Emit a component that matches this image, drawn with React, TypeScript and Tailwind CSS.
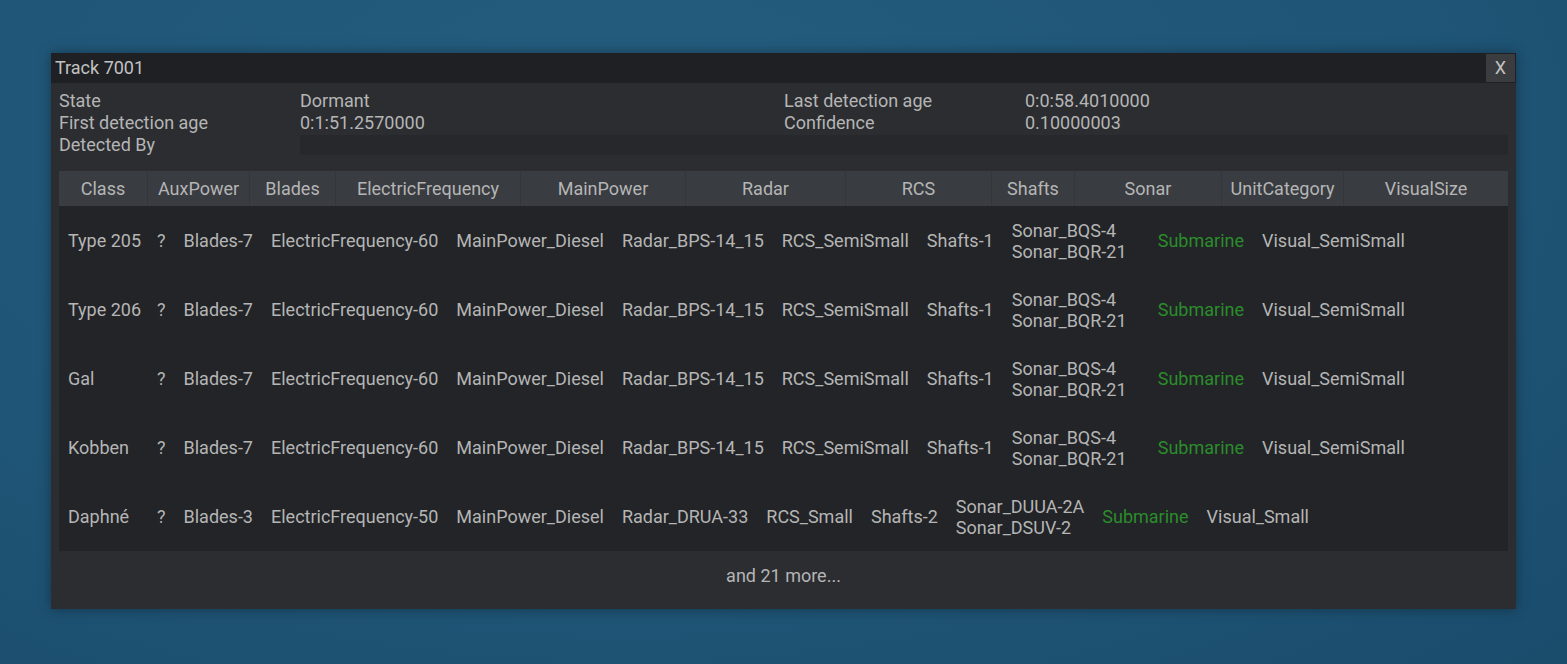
import React from 'react';

type Row = {
  cls: string;
  blades: string;
  freq: string;
  radar: string;
  rcs: string;
  shafts: string;
  sonar: [string, string];
  visual: string;
};

const rows: Row[] = [
  { cls: 'Type 205', blades: 'Blades-7', freq: 'ElectricFrequency-60', radar: 'Radar_BPS-14_15', rcs: 'RCS_SemiSmall', shafts: 'Shafts-1', sonar: ['Sonar_BQS-4', 'Sonar_BQR-21'], visual: 'Visual_SemiSmall' },
  { cls: 'Type 206', blades: 'Blades-7', freq: 'ElectricFrequency-60', radar: 'Radar_BPS-14_15', rcs: 'RCS_SemiSmall', shafts: 'Shafts-1', sonar: ['Sonar_BQS-4', 'Sonar_BQR-21'], visual: 'Visual_SemiSmall' },
  { cls: 'Gal', blades: 'Blades-7', freq: 'ElectricFrequency-60', radar: 'Radar_BPS-14_15', rcs: 'RCS_SemiSmall', shafts: 'Shafts-1', sonar: ['Sonar_BQS-4', 'Sonar_BQR-21'], visual: 'Visual_SemiSmall' },
  { cls: 'Kobben', blades: 'Blades-7', freq: 'ElectricFrequency-60', radar: 'Radar_BPS-14_15', rcs: 'RCS_SemiSmall', shafts: 'Shafts-1', sonar: ['Sonar_BQS-4', 'Sonar_BQR-21'], visual: 'Visual_SemiSmall' },
  { cls: 'Daphné', blades: 'Blades-3', freq: 'ElectricFrequency-50', radar: 'Radar_DRUA-33', rcs: 'RCS_Small', shafts: 'Shafts-2', sonar: ['Sonar_DUUA-2A', 'Sonar_DSUV-2'], visual: 'Visual_Small' },
];

const headers: { label: string; w: string }[] = [
  { label: 'Class', w: 'w-[89px]' },
  { label: 'AuxPower', w: 'w-[102px]' },
  { label: 'Blades', w: 'w-[86px]' },
  { label: 'ElectricFrequency', w: 'w-[185px]' },
  { label: 'MainPower', w: 'w-[165px]' },
  { label: 'Radar', w: 'w-[160px]' },
  { label: 'RCS', w: 'w-[146px]' },
  { label: 'Shafts', w: 'w-[83px]' },
  { label: 'Sonar', w: 'w-[147px]' },
  { label: 'UnitCategory', w: 'w-[122px]' },
  { label: 'VisualSize', w: 'flex-1' },
];

function Cell({ children, className = '' }: { children: React.ReactNode; className?: string }) {
  return <div className={['shrink-0 px-[9px] whitespace-nowrap', className].join(' ')}>{children}</div>;
}

export default function App() {
  return (
    <div
      className="h-[664px] w-full bg-[radial-gradient(ellipse_at_40%_20%,#245d7f_0%,#1f5576_60%,#1a4c6c_100%)] pt-[53px] pl-[51px] text-[18px] leading-[22px] text-[#b5b5b5]"
      style={{ fontFamily: 'Roboto, "Noto Sans", sans-serif' }}
    >
      <div className="w-[1465px] bg-[#2b2d31] shadow-[0_0_12px_rgba(0,0,0,0.35)]">
        {/* title bar */}
        <div className="flex h-[30px] items-center bg-[#1e2023]">
          <div className="flex-1 pl-[4px] text-[#c2c2c2]">Track 7001</div>
          <button className="mr-[1px] flex h-[28px] w-[29px] items-center justify-center bg-[#3a3c40] text-[#c2c2c2]">X</button>
        </div>

        <div className="px-[8px] pt-[7px] pb-[8px]">
          {/* info grid */}
          <div className="grid grid-cols-[241px_484px_241px_1fr]">
            <div>State</div>
            <div>Dormant</div>
            <div>Last detection age</div>
            <div>0:0:58.4010000</div>
            <div>First detection age</div>
            <div>0:1:51.2570000</div>
            <div>Confidence</div>
            <div>0.10000003</div>
            <div>Detected By</div>
            <div className="col-span-3 my-[1px] h-[20px] bg-[#26282b]" />
          </div>

          {/* table */}
          <div className="mt-[15px]">
            <div className="flex h-[35px] items-center bg-[#393c41]">
              {headers.map((h, i) => (
                <div
                  key={h.label}
                  className={[
                    h.w,
                    'flex h-full items-center justify-center',
                    i < headers.length - 1 ? 'border-r border-[#33363a]' : '',
                  ].join(' ')}
                >
                  {h.label}
                </div>
              ))}
            </div>
            <div className="bg-[#222427]">
              {rows.map((r) => (
                <div key={r.cls} className="flex h-[69px] items-center">
                  <Cell className="w-[89px]">{r.cls}</Cell>
                  <Cell>?</Cell>
                  <Cell>{r.blades}</Cell>
                  <Cell>{r.freq}</Cell>
                  <Cell>MainPower_Diesel</Cell>
                  <Cell>{r.radar}</Cell>
                  <Cell>{r.rcs}</Cell>
                  <Cell>{r.shafts}</Cell>
                  <Cell className="min-w-[146px] leading-[21px]">
                    <div>{r.sonar[0]}</div>
                    <div>{r.sonar[1]}</div>
                  </Cell>
                  <Cell className="text-[#2b8c2b]">Submarine</Cell>
                  <Cell>{r.visual}</Cell>
                </div>
              ))}
            </div>
          </div>

          <div className="flex h-[50px] items-center justify-center">and 21 more...</div>
        </div>
      </div>
    </div>
  );
}
